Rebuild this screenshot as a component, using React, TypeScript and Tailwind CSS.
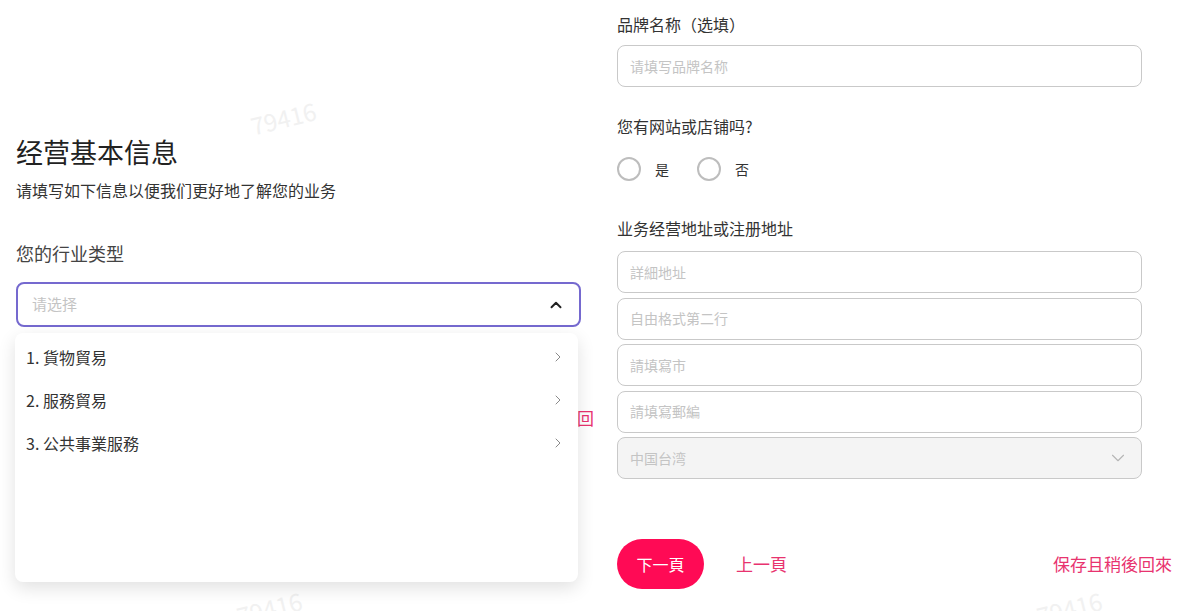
import { ChevronUp, ChevronRight, ChevronDown } from "lucide-react";

const font = { fontFamily: '"Noto Sans CJK SC", "Noto Sans", sans-serif' };

const industries = ["1. 貨物貿易", "2. 服務貿易", "3. 公共事業服務"];

const addressFields = ["詳細地址", "自由格式第二行", "請填寫市", "請填寫郵編"];

function TextInput({ placeholder }: { placeholder: string }) {
  return (
    <div className="h-[42px] w-[525px] rounded-lg border border-[#c9c9c9] bg-white flex items-center px-3">
      <span className="text-[14px] text-[#c4c4c4]">{placeholder}</span>
    </div>
  );
}

function Radio({ label }: { label: string }) {
  return (
    <div className="flex items-center gap-[14px]">
      <span className="w-6 h-6 rounded-full border-2 border-[#bdbdbd] bg-white" />
      <span className="text-[14px] text-[#333]">{label}</span>
    </div>
  );
}

export default function App() {
  return (
    <div className="relative w-[1184px] h-[611px] overflow-hidden bg-white text-[#333]" style={font}>
      {/* watermarks */}
      <span className="absolute left-[250px] top-[100px] -rotate-[14deg] text-[24px] text-[#f1f1f1] pointer-events-none">
        79416
      </span>
      <span className="absolute left-[236px] top-[590px] -rotate-[14deg] text-[24px] text-[#f1f1f1] pointer-events-none">
        79416
      </span>
      <span className="absolute left-[1036px] top-[590px] -rotate-[14deg] text-[24px] text-[#f1f1f1] pointer-events-none">
        79416
      </span>

      <div className="flex h-full">
        {/* LEFT */}
        <div className="w-[593px] overflow-hidden pl-4 pt-[134px]">
          <h1 className="text-[27px] leading-9 text-[#222]">经营基本信息</h1>
          <p className="mt-2 text-[16px] leading-6 text-[#333]">请填写如下信息以便我们更好地了解您的业务</p>
          <p className="mt-[38px] text-[18px] leading-[26px] text-[#444]">您的行业类型</p>

          <div className="relative mt-4 w-[565px]">
            <div className="h-[45px] rounded-lg border-2 border-[#7569cf] bg-white flex items-center justify-between pl-[14px] pr-[14px]">
              <span className="text-[15px] text-[#c4c4c4]">请选择</span>
              <ChevronUp size={18} strokeWidth={2.6} className="text-[#222]" />
            </div>

            <div className="flex justify-end mt-[78px] -mr-[30px]">
              <span className="text-[17px] text-[#e8336f]">保存且稍後回來</span>
            </div>

            {/* dropdown overlay */}
            <div className="absolute left-[-1px] top-[51px] w-[563px] h-[249px] rounded-lg bg-white shadow-[0_6px_18px_rgba(0,0,0,0.12)] z-10 pt-[2px]">
              {industries.map((item) => (
                <div key={item} className="h-[43px] flex items-center justify-between pl-[11px] pr-[12px]">
                  <span className="text-[16px] text-[#333]">{item}</span>
                  <ChevronRight size={16} strokeWidth={1.5} className="text-[#8a8a8a]" />
                </div>
              ))}
            </div>
          </div>
        </div>

        {/* RIGHT */}
        <div className="flex-1 pl-6 pr-3 pt-[12px] flex flex-col">
          <p className="text-[16px] leading-6 text-[#333]">品牌名称（选填）</p>
          <div className="mt-[9px]">
            <TextInput placeholder="请填写品牌名称" />
          </div>

          <p className="mt-[27px] text-[16px] leading-6 text-[#333]">您有网站或店铺吗?</p>
          <div className="mt-[19px] flex items-center gap-[28px]">
            <Radio label="是" />
            <Radio label="否" />
          </div>

          <p className="mt-[35px] text-[16px] leading-6 text-[#333]">业务经营地址或注册地址</p>
          <div className="mt-[11px] flex flex-col gap-[4.5px]">
            {addressFields.map((f) => (
              <TextInput key={f} placeholder={f} />
            ))}
            <div className="h-[42px] w-[525px] rounded-lg border border-[#c9c9c9] bg-[#f4f4f4] flex items-center justify-between pl-3 pr-3">
              <span className="text-[14px] text-[#c4c4c4]">中国台湾</span>
              <ChevronDown size={22} strokeWidth={1.2} className="text-[#b5b5b5]" />
            </div>
          </div>

          <div className="mt-[60px] flex items-center">
            <button className="h-[50px] w-[87px] rounded-full bg-[#ff0a55] text-white text-[16px]">下一頁</button>
            <button className="ml-8 text-[17px] text-[#e8336f]">上一頁</button>
            <button className="ml-auto text-[17px] text-[#e8336f]">保存且稍後回來</button>
          </div>
        </div>
      </div>
    </div>
  );
}
